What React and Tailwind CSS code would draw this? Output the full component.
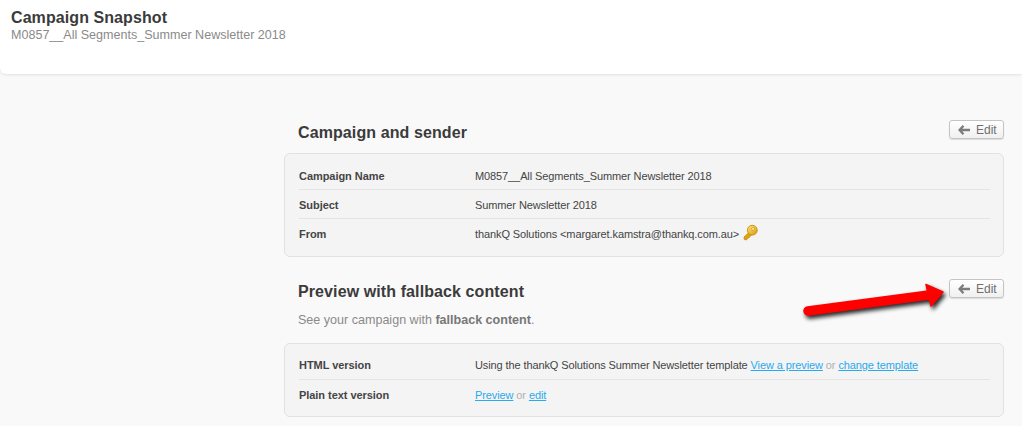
import React from 'react';

const font = { fontFamily: '"Liberation Sans", Arial, sans-serif' };

function EditButton() {
  return (
    <button className="flex items-center w-[55px] h-[19px] pl-[8px] rounded-[3px] border border-[#c4c4c4] bg-gradient-to-b from-white to-[#f0f0f0] shadow-[0_1px_1px_rgba(0,0,0,0.12)] text-[12px] text-[#6f6f6f]">
      <svg width="12" height="10" viewBox="0 0 12 10" className="mr-[6px]">
        <path d="M5.5 0.8 L1.6 5 L5.5 9.2 M2 5 H12" fill="none" stroke="#7c7c7c" strokeWidth="2.3" />
      </svg>
      Edit
    </button>
  );
}

function Row({ label, last, tall, children }) {
  return (
    <div className={`flex items-start pt-[2px] leading-[27px] text-[11px] ${tall ? 'h-[30px]' : 'h-[29px]'} ${last ? '' : 'border-b border-[#e4e4e4]'}`}>
      <div className="w-[176px] font-bold tracking-[-0.05px] text-[#444]">{label}</div>
      <div className="tracking-[-0.105px] text-[#444]">{children}</div>
    </div>
  );
}

function Key() {
  return (
    <svg width="15" height="17" viewBox="0 0 15 17" className="inline-block ml-[4px] -mt-[5px] align-middle">
      <defs>
        <linearGradient id="gold" x1="0" y1="0" x2="1" y2="1">
          <stop offset="0" stopColor="#ffe27a" />
          <stop offset="1" stopColor="#dc9a08" />
        </linearGradient>
      </defs>
      <path d="M6.5 8 L1 13 L1.3 15.6 L3.8 15.8 L4.6 14 L6.4 13.6 L7 12 L9.5 10.5 Z" fill="#e3a30c" stroke="#b98409" strokeWidth="0.7" strokeLinejoin="round" />
      <circle cx="9.3" cy="6.2" r="4.9" fill="url(#gold)" stroke="#c48f0a" strokeWidth="0.9" />
      <circle cx="10" cy="4.9" r="1.4" fill="#fff6cf" stroke="#c48f0a" strokeWidth="0.6" />
    </svg>
  );
}

function RedArrow() {
  return (
    <svg width="160" height="50" viewBox="0 0 160 50" className="absolute left-[795px] top-[275px] drop-shadow-[2px_3px_2px_rgba(0,0,0,0.85)]">
      <path d="M13 36 L134 20" stroke="#ff0000" strokeWidth="9.5" strokeLinecap="round" />
      <path d="M131 9.5 L148 17 L136 31 Z" fill="#ff0000" stroke="#ff0000" strokeWidth="1.5" strokeLinejoin="round" />
    </svg>
  );
}

export default function App() {
  return (
    <div className="relative h-[426px] overflow-hidden bg-[#f9f9f9]" style={font}>
      {/* header */}
      <div className="h-[74px] bg-white rounded-bl-[6px] shadow-[0_1px_3px_rgba(0,0,0,0.1)] pl-[11px] pt-[9px]">
        <h1 className="text-[16px] leading-[18px] font-bold tracking-[0.08px] text-[#3b3b3b]">Campaign Snapshot</h1>
        <p className="text-[12.55px] leading-[16px] text-[#8a8a8a]">M0857__All Segments_Summer Newsletter 2018</p>
      </div>

      <div className="ml-[284px] mr-[18px]">
        <div className="flex justify-between items-start pt-[46px] h-[79px]">
          <h2 className="pl-[14px] pt-[1px] text-[16px] leading-[24px] font-bold tracking-[0.1px] text-[#3b3b3b]">Campaign and sender</h2>
          <EditButton />
        </div>

        <div className="h-[104px] rounded-[6px] border border-[#e2e2e2] bg-[#f4f4f4] pl-[14px] pr-[13px] pt-[7px]">
          <Row label="Campaign Name">M0857__All Segments_Summer Newsletter 2018</Row>
          <Row label="Subject">Summer Newsletter 2018</Row>
          <Row label="From" last>thankQ Solutions &lt;margaret.kamstra@thankq.com.au&gt;<Key /></Row>
        </div>

        <div className="flex justify-between items-start h-[86px] pt-[22px]">
          <div className="pl-[14px] pt-[1px]">
            <h2 className="text-[16px] leading-[24px] font-bold tracking-[0.1px] text-[#3b3b3b]">Preview with fallback content</h2>
            <p className="mt-[7px] text-[12.55px] leading-[18px] text-[#8a8a8a]">
              See your campaign with <b className="text-[#777]">fallback content</b>.
            </p>
          </div>
          <EditButton />
        </div>

        <div className="h-[74px] rounded-[6px] border border-[#e2e2e2] bg-[#f4f4f4] pl-[14px] pr-[13px] pt-[6px]">
          <Row label="HTML version" tall>
            Using the thankQ Solutions Summer Newsletter template{' '}
            <a className="text-[#2aa9ee] underline">View a preview</a> <span className="text-[#b0b0b0]">or</span>{' '}
            <a className="text-[#2aa9ee] underline">change template</a>
          </Row>
          <Row label="Plain text version" last>
            <a className="text-[#2aa9ee] underline">Preview</a> <span className="text-[#b0b0b0]">or</span>{' '}
            <a className="text-[#2aa9ee] underline">edit</a>
          </Row>
        </div>
      </div>

      <RedArrow />
    </div>
  );
}
